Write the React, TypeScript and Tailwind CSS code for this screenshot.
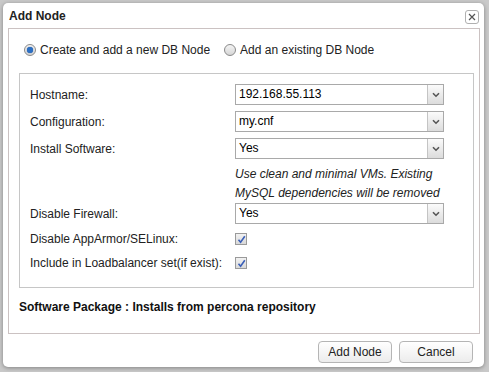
import React from 'react';

const font = { fontFamily: '"Liberation Sans", Arial, sans-serif' };

const Radio: React.FC<{ checked?: boolean }> = ({ checked }) => (
    <span className="w-[12px] h-[12px] rounded-full border border-[#8a8a8a] bg-gradient-to-b from-[#f4f4f4] to-[#d6d6d6] flex items-center justify-center">
        {checked && <span className="w-[6px] h-[6px] rounded-full bg-[#2b6fc4] shadow-[0_0_1px_#0b3f86]" />}
    </span>
);

const Select: React.FC<{ value: string }> = ({ value }) => (
    <div className="w-[209px] h-[21px] border border-[#a9a9a9] bg-white flex items-stretch">
        <span className="flex-1 pl-[3px] text-[12px] leading-[19px] text-black">{value}</span>
        <span className="w-[16px] border-l border-[#c4c4c4] bg-gradient-to-b from-[#fbfbfb] to-[#dcdcdc] flex items-center justify-center">
            <svg width="8" height="6" viewBox="0 0 8 6">
                <path d="M1 1.2 L4 4.2 L7 1.2" fill="none" stroke="#555" strokeWidth="1.6" />
            </svg>
        </span>
    </div>
);

const Checkbox: React.FC = () => (
    <span className="w-[12px] h-[12px] border border-[#9a9a9a] bg-gradient-to-b from-[#f2f2f2] to-[#d9d9d9] flex items-center justify-center">
        <svg width="9" height="9" viewBox="0 0 9 9">
            <path d="M1.5 4.8 L3.6 7.2 L7.8 1.2" fill="none" stroke="#3a5fb8" strokeWidth="1.6" />
        </svg>
    </span>
);

const Row: React.FC<{ label: string; className?: string; children: React.ReactNode }> = ({ label, className, children }) => (
    <div className={`flex items-center ${className ?? ''}`}>
        <span className="w-[205px] text-[12px] text-[#222]">{label}</span>
        {children}
    </div>
);

const Button: React.FC<{ label: string }> = ({ label }) => (
    <button className="w-[74px] h-[22px] rounded-[4px] border border-[#b5b5b5] bg-gradient-to-b from-white to-[#ececec] text-[12px] text-[#222] flex items-center justify-center">
        {label}
    </button>
);

export default function App() {
    return (
        <div className="w-[489px] h-[372px] bg-[#c9c9c9] pt-[3px] pl-[3px]" style={font}>
            <div className="w-[481px] h-[364px] bg-white rounded-[5px] shadow-[0_1px_4px_rgba(0,0,0,0.35)] flex flex-col">
                {/* Title bar */}
                <div className="h-[25px] flex items-center justify-between pl-[6px] pr-[5px]">
                    <span className="text-[12px] font-bold text-[#222]">Add Node</span>
                    <span className="w-[14px] h-[14px] mt-[2px] border border-[#b0b0b0] rounded-[3px] flex items-center justify-center">
                        <svg width="8" height="8" viewBox="0 0 8 8">
                            <path d="M1 1 L7 7 M7 1 L1 7" stroke="#555" strokeWidth="1.2" />
                        </svg>
                    </span>
                </div>

                {/* Main panel */}
                <div className="ml-[5px] mr-[4px] h-[306px] border border-[#cbc2c2] flex flex-col">
                    <div className="h-[20px] mt-[11px] pl-[15px] flex items-center text-[12px] text-[#222]">
                        <Radio checked />
                        <span className="ml-[4px]">Create and add a new DB Node</span>
                        <span className="ml-[14px]"><Radio /></span>
                        <span className="ml-[4px]">Add an existing DB Node</span>
                    </div>

                    <div className="mt-[13px] ml-[10px] mr-[5px] h-[215px] border border-[#c6c6c6] pl-[10px] pt-[10px] flex flex-col">
                        <Row label="Hostname:"><Select value="192.168.55.113" /></Row>
                        <Row label="Configuration:" className="mt-[6px]"><Select value="my.cnf" /></Row>
                        <Row label="Install Software:" className="mt-[6px]"><Select value="Yes" /></Row>
                        <div className="mt-[6px] pl-[205px] text-[12px] italic leading-[19px] text-[#222]">
                            <div>Use clean and minimal VMs. Existing</div>
                            <div>MySQL dependencies will be removed</div>
                        </div>
                        <Row label="Disable Firewall:"><Select value="Yes" /></Row>
                        <Row label="Disable AppArmor/SELinux:" className="mt-[5px] h-[20px]"><Checkbox /></Row>
                        <Row label="Include in Loadbalancer set(if exist):" className="mt-[4px] h-[20px]"><Checkbox /></Row>
                    </div>

                    <div className="mt-[9px] h-[20px] pl-[10px] flex items-center text-[12px] font-bold text-[#111]">
                        Software Package : Installs from percona repository
                    </div>
                </div>

                {/* Footer */}
                <div className="mt-[7px] pr-[11px] flex justify-end gap-[7px]">
                    <Button label="Add Node" />
                    <Button label="Cancel" />
                </div>
            </div>
        </div>
    );
}
